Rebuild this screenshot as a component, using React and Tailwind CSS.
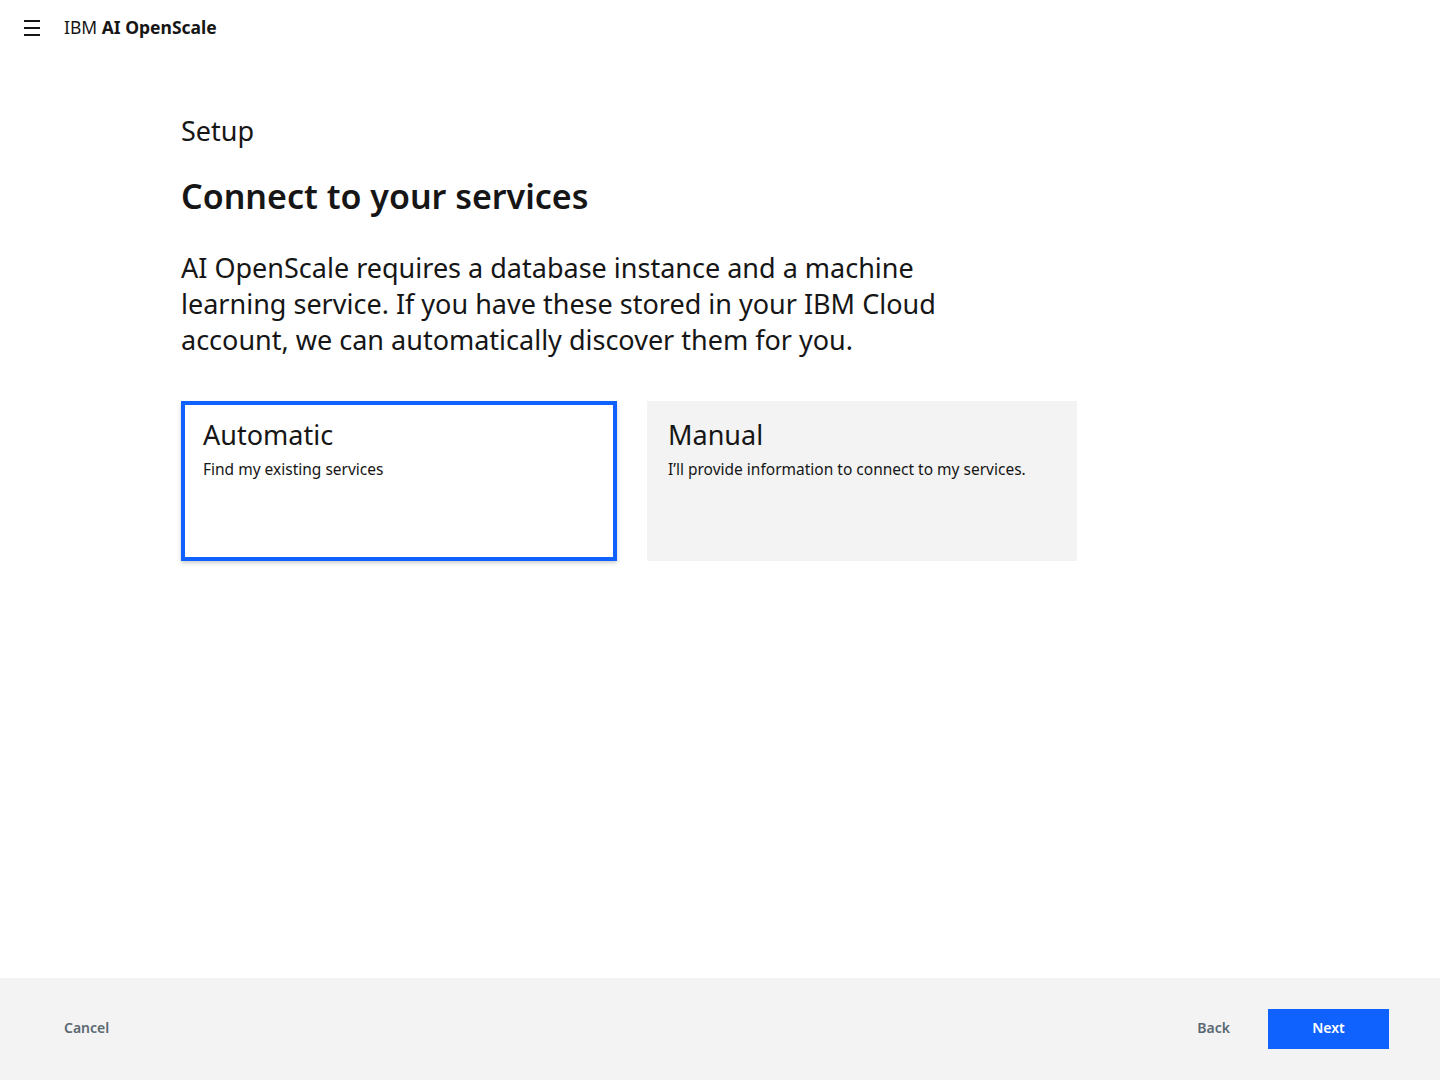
import React from 'react';

const font = { fontFamily: '"Noto Sans", "Liberation Sans", sans-serif' };

function Header() {
  return (
    <header className="h-14 flex items-center px-6 text-[#161616]">
      <button className="w-4 h-4 flex flex-col justify-between items-stretch mr-6">
        <span className="h-[2px] bg-[#161616] block" />
        <span className="h-[2px] bg-[#161616] block" />
        <span className="h-[2px] bg-[#161616] block" />
      </button>
      <div className="text-[17.5px] leading-none -mt-[1px]">
        IBM <span className="font-bold">AI OpenScale</span>
      </div>
    </header>
  );
}

function OptionCard({ title, desc, selected }) {
  return (
    <div
      className={
        selected
          ? 'w-[436px] h-[160px] border-4 border-[#0f62fe] bg-white px-[18px] pt-[12px] shadow-[0_2px_4px_rgba(0,0,0,0.2)]'
          : 'w-[430px] h-[160px] bg-[#f3f3f3] px-[21px] pt-[16px]'
      }
    >
      <div className="text-[27px] leading-[36px] text-[#161616]">{title}</div>
      <div className="text-[15.5px] leading-[24px] mt-[4px] text-[#161616]">{desc}</div>
    </div>
  );
}

export default function App() {
  return (
    <div style={font} className="min-h-screen h-[1080px] flex flex-col bg-white text-[#161616]">
      <Header />
      <main className="flex-1 pl-[181px] pt-[57px]">
        <h2 className="text-[27px] leading-[36px]">Setup</h2>
        <h1 className="text-[34px] leading-[44px] font-semibold mt-[25px]">Connect to your services</h1>
        <p className="text-[27px] leading-[36px] mt-[32px]">
          AI OpenScale requires a database instance and a machine
          <br />
          learning service. If you have these stored in your IBM Cloud
          <br />
          account, we can automatically discover them for you.
        </p>
        <div className="flex gap-[30px] mt-[43px]">
          <OptionCard selected title="Automatic" desc="Find my existing services" />
          <OptionCard title="Manual" desc="I’ll provide information to connect to my services." />
        </div>
      </main>
      <footer className="h-[102px] bg-[#f3f3f3] flex items-center justify-between pl-16 pr-[51px]">
        <button className="text-[14px] font-semibold text-[#5a6872] pb-[4px]">Cancel</button>
        <div className="flex items-center gap-[38px]">
          <button className="text-[14px] font-semibold text-[#5a6872] pb-[4px]">Back</button>
          <button className="w-[121px] h-10 bg-[#0f62fe] text-white text-[14px] font-semibold pb-[4px]">Next</button>
        </div>
      </footer>
    </div>
  );
}
